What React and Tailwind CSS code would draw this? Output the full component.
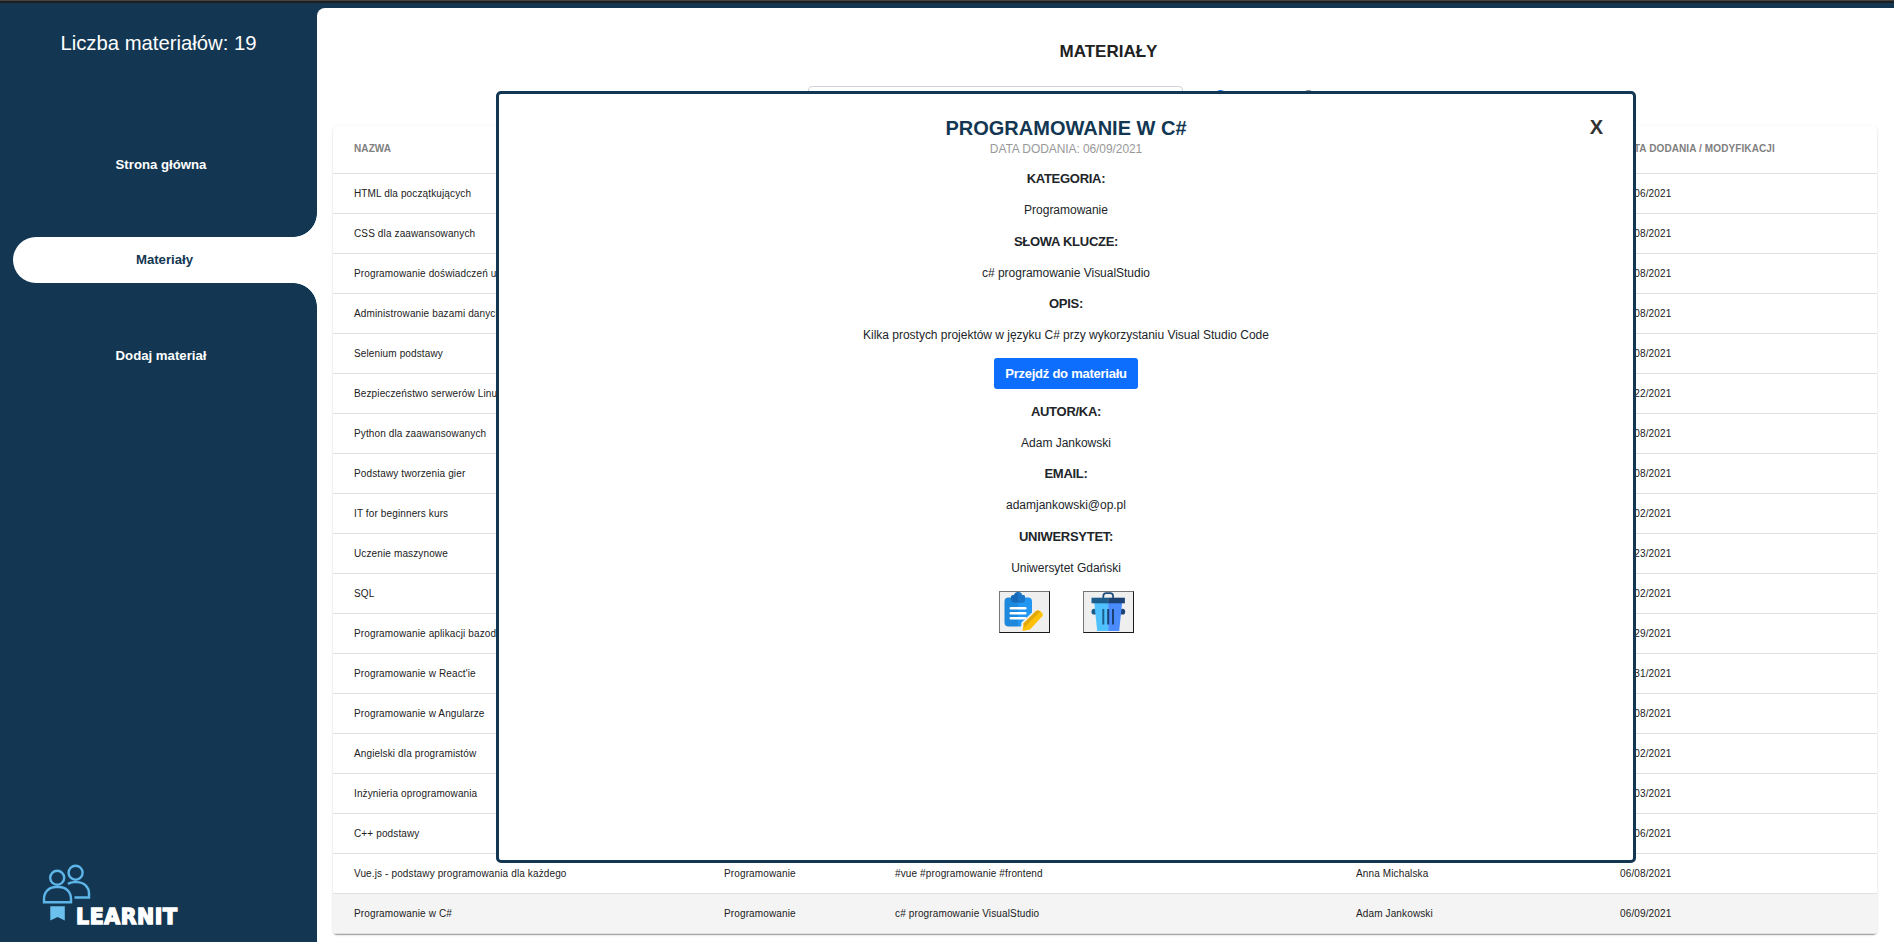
const rows = [
  ["HTML dla początkujących", "Programowanie", "#html #frontend", "Anna Michalska", "06/06/2021"],
  ["CSS dla zaawansowanych", "Programowanie", "#css #frontend", "Anna Michalska", "06/08/2021"],
  ["Programowanie doświadczeń użytkownika", "Programowanie", "#ux #frontend", "Anna Michalska", "06/08/2021"],
  ["Administrowanie bazami danych", "Bazy danych", "#sql #bazy", "Adam Jankowski", "06/08/2021"],
  ["Selenium podstawy", "Testowanie", "#selenium", "Adam Jankowski", "06/08/2021"],
  ["Bezpieczeństwo serwerów Linux", "Sieci", "#linux", "Adam Jankowski", "05/22/2021"],
  ["Python dla zaawansowanych", "Programowanie", "#python", "Anna Michalska", "06/08/2021"],
  ["Podstawy tworzenia gier", "Programowanie", "#gry", "Anna Michalska", "06/08/2021"],
  ["IT for beginners kurs", "Inne", "#it", "Adam Jankowski", "06/02/2021"],
  ["Uczenie maszynowe", "Programowanie", "#ml", "Adam Jankowski", "05/23/2021"],
  ["SQL", "Bazy danych", "#sql", "Adam Jankowski", "06/02/2021"],
  ["Programowanie aplikacji bazodanowych", "Programowanie", "#bazy", "Adam Jankowski", "05/29/2021"],
  ["Programowanie w React'ie", "Programowanie", "#react", "Anna Michalska", "05/31/2021"],
  ["Programowanie w Angularze", "Programowanie", "#angular", "Anna Michalska", "06/08/2021"],
  ["Angielski dla programistów", "Inne", "#angielski", "Anna Michalska", "06/02/2021"],
  ["Inżynieria oprogramowania", "Programowanie", "#inżynieria", "Adam Jankowski", "06/03/2021"],
  ["C++ podstawy", "Programowanie", "#c++", "Adam Jankowski", "06/06/2021"],
  ["Vue.js - podstawy programowania dla każdego", "Programowanie", "#vue #programowanie #frontend", "Anna Michalska", "06/08/2021"],
  ["Programowanie w C#", "Programowanie", "c# programowanie VisualStudio", "Adam Jankowski", "06/09/2021"],
];

const COLS = "grid grid-cols-[370px_171px_461px_264px_1fr] items-center pl-[21px]";

function Logo() {
  return (
    <div className="flex h-[62px] pl-[42px]">
      <svg className="mt-[1px] shrink-0" width="50" height="60" viewBox="0 0 50 60" fill="none" stroke="#5db5e8" strokeWidth="2.4">
        <circle cx="15.2" cy="13.8" r="7" />
        <circle cx="33.6" cy="8.700" r="7" />
        <path d="M2 38.2V35c0-7 5-12 12-12h3c7 0 12 5 12 12v3.200z" />
        <path d="M26 20c2-1.600 4-1.900 6-1.900h3c7 0 12 5 12 11.500V33.500H32.500" />
        <path d="M8.300 42.200h14.500v14.200l-7.200-3.500-7.300 3.500z" fill="#6cc0ee" stroke="none" />
      </svg>
      <span className="-ml-[16px] mt-[42px] font-['DejaVu_Sans',sans-serif] text-[20.5px] font-bold leading-[24px] tracking-[0.6px] text-white [-webkit-text-stroke:1.4px_white]">
        LEARNIT
      </span>
    </div>
  );
}

function Sidebar() {
  return (
    <aside className="flex w-[317px] shrink-0 flex-col bg-[#133752]">
      <div className="pt-[22px] text-center text-[20.3px] leading-[36px] text-white">Liczba materiałów: 19</div>
      <nav className="mt-[80px] flex flex-col text-[13.2px] font-bold">
        <a className="flex h-[46px] items-center justify-center pt-[2px] pl-[5px] text-white">Strona główna</a>
        <span className="mt-[26px] h-6 w-6 self-end bg-[radial-gradient(circle_at_0_0,transparent_23.5px,white_24.2px)]" />
        <a className="ml-[13px] flex h-[46px] items-center justify-center rounded-l-full bg-white pr-[1px] text-[#133752]">Materiały</a>
        <span className="h-6 w-6 self-end bg-[radial-gradient(circle_at_0_100%,transparent_23.5px,white_24.2px)]" />
        <a className="mt-[25px] flex h-[46px] items-center justify-center pt-[2px] pl-[5px] text-white">Dodaj materiał</a>
      </nav>
      <div className="mt-auto pb-[17px]">
        <Logo />
      </div>
    </aside>
  );
}

function Label({ children }) {
  return <div className="h-[31px] text-[13px] font-bold leading-[31px] tracking-[-0.28px] text-[#212529]">{children}</div>;
}

function Value({ children }) {
  return <div className="mb-[-0.5px] h-[32px] text-[12px] leading-[33.4px] tracking-[-0.02px] text-[#212529]">{children}</div>;
}

function EditIcon() {
  return (
    <svg width="40" height="40" viewBox="0 0 40 40">
      <path d="M14 5.500H4.500A4 4 0 0 0 .5 9.500v21a4 4 0 0 0 4 4H14z" fill="#1e88dd" />
      <path d="M14 5.500h10a4 4 0 0 1 4 4V25l-9 9.500h-5z" fill="#2196f3" />
      <path d="M7 5c0-1.500 1-2 3-2 .5-2 2-3 4-3s3.500 1 4 3c2 0 3 .5 3 2v2a3.500 3.500 0 0 1-3.500 3.500h-7A3.500 3.500 0 0 1 7 7z" fill="#1668b8" />
      <path d="M14 0c2 0 3.500 1 4 3 2 0 3 .5 3 2v2a3.500 3.500 0 0 1-3.500 3.500H14z" fill="#1b76c9" />
      <path d="M6.800 16.300h14.500M6.800 21.300h14.500M6.800 26.300h14.500" stroke="#fff" strokeWidth="2.600" strokeLinecap="round" />
      <path d="M16.500 38.500l1-8L30.500 18l9 3-14 17z" fill="#efefef" />
      <path d="M19.500 31.500l12.500-12.500c2.500-2 8.500 2 6.300 5.300L26 37.500l-7.500 1.500z" fill="#ffc107" />
      <path d="M19.500 31.500l12.500-12.500c1.200-.9 2.900-.6 4.300.5L20.500 35.500z" fill="#e0a80b" />
    </svg>
  );
}

function TrashIcon() {
  return (
    <svg className="ml-[1px]" width="40" height="40" viewBox="0 0 40 40">
      <circle cx="5.300" cy="19.700" r="2.900" fill="#1d5d8c" />
      <circle cx="33.300" cy="19.700" r="2.900" fill="#1c4274" />
      <path d="M5.200 10h14v29H8.200z" fill="#50c1ff" />
      <path d="M19.200 10h14l-3 29h-11z" fill="#4a8bff" />
      <path d="M14.300 6V4.200c0-2 1-3 3-3h3.800c2 0 3 1 3 3V6" fill="none" stroke="#1d4b7c" strokeWidth="1.700" />
      <path d="M2.500 5.700h16.700v5.600H2.500z" fill="#1d5d8c" />
      <path d="M19.200 5.700h16.700v5.600H19.200z" fill="#1c4274" />
      <path d="M14.300 17v15.500" stroke="#1d5d8c" strokeWidth="2" />
      <path d="M19.200 17v15.500M24 17v15.500" stroke="#1c4274" strokeWidth="2" />
    </svg>
  );
}

function IconButton({ label, children }) {
  return (
    <button aria-label={label} className="flex h-[42px] w-[51px] items-center justify-center border border-t-[#767676] border-r-[#1a1a1a] border-b-[#1a1a1a] border-l-[#767676] bg-[#efefef]">
      {children}
    </button>
  );
}

function Modal() {
  return (
    <section className="absolute left-[496px] top-[91px] z-10 h-[772px] w-[1140px] rounded-[5px] border-[3px] border-[#133752] bg-white text-center">
      <button aria-label="Zamknij" className="absolute right-[30px] top-[20px] text-[20px] font-bold leading-[26px] text-[#333]">X</button>
      <h2 className="mt-[20px] text-[20px] font-bold leading-[28px] text-[#133752]">PROGRAMOWANIE W C#</h2>
      <div className="h-[21px] text-[12px] leading-[15px] tracking-[-0.08px] text-[#999]">DATA DODANIA: 06/09/2021</div>
      <Label>KATEGORIA:</Label>
      <Value>Programowanie</Value>
      <Label>SŁOWA KLUCZE:</Label>
      <Value>c# programowanie VisualStudio</Value>
      <Label>OPIS:</Label>
      <Value>Kilka prostych projektów w języku C# przy wykorzystaniu Visual Studio Code</Value>
      <button className="mx-auto mt-[7px] mb-[7px] flex h-[31px] w-[144px] items-center justify-center rounded-[3px] bg-[#0d6efd] pt-px text-[13px] font-bold tracking-[-0.25px] text-white">
        Przejdź do materiału
      </button>
      <Label>AUTOR/KA:</Label>
      <Value>Adam Jankowski</Value>
      <Label>EMAIL:</Label>
      <Value>adamjankowski@op.pl</Value>
      <Label>UNIWERSYTET:</Label>
      <Value>Uniwersytet Gdański</Value>
      <div className="mt-[8px] flex justify-center gap-[33px]">
        <IconButton label="Edytuj"><EditIcon /></IconButton>
        <IconButton label="Usuń"><TrashIcon /></IconButton>
      </div>
    </section>
  );
}

export default function App() {
  return (
    <div className="relative flex h-[942px] w-[1894px] flex-col overflow-hidden bg-[#133752] font-['Liberation_Sans',Arial,sans-serif]">
      <div className="h-[3px] shrink-0 border-t border-[#444] bg-[#1e1e1e]" />
      <div className="flex min-h-0 flex-1">
        <Sidebar />
        <main className="mt-[5px] flex-1 rounded-tl-[8px] bg-white pr-[17px] pl-[16px]">
          <h1 className="pt-[32px] pl-[7px] text-center text-[17px] font-bold leading-[24px] text-[#212121]">MATERIAŁY</h1>
          <div className="mt-[22px] flex h-[39.500px] items-start pl-[475px]">
            <div className="h-[36px] w-[375px] rounded-[4px] border border-[#ced4da]" />
            <span className="mt-[4px] ml-[31px] h-[13px] w-[13px] rounded-full border-2 border-[#0d6efd]" />
            <span className="mt-[4px] ml-[75px] h-[13px] w-[13px] rounded-full border border-[#767676]" />
          </div>
          <div className="rounded-[4px] bg-white text-[10px] tracking-[0.13px] text-[#212121] shadow-[0_2px_1px_-1px_rgba(0,0,0,0.2),0_1px_1px_0_rgba(0,0,0,0.14),0_1px_3px_0_rgba(0,0,0,0.12)]">
            <div className={`${COLS} h-[48px] border-b border-[#e0e0e0] pb-[2px] font-bold tracking-[0.1px] text-[#808080]`}>
              <span>NAZWA</span>
              <span>KATEGORIA</span>
              <span>SŁOWA KLUCZE</span>
              <span>AUTOR</span>
              <span>DATA DODANIA / MODYFIKACJI</span>
            </div>
            {rows.map((row) => (
              <div key={row[0]} className={`${COLS} h-[40px] border-b border-[#e0e0e0] last:bg-[#f4f4f4]`}>
                {row.map((cell, i) => (
                  <span key={i}>{cell}</span>
                ))}
              </div>
            ))}
          </div>
        </main>
      </div>
      <Modal />
    </div>
  );
}
